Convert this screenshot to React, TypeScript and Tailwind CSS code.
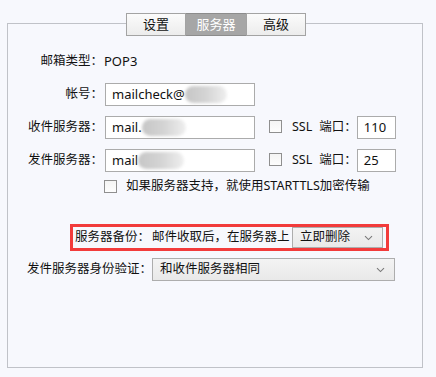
import * as React from "react"

const font = { fontFamily: '"Noto Sans", "Noto Sans CJK SC", sans-serif' }

// 模糊处理的文字块
function Blur({ w }: { w: number }) {
  return (
    <span
      className="inline-block h-[17px] rounded-full bg-gradient-to-r from-[#c6c6c6] via-[#d4d4d4] to-[#efefef] blur-[1.5px] align-middle"
      style={{ width: w }}
    />
  )
}

function CheckBox() {
  return (
    <span className="inline-block h-[13px] w-[13px] shrink-0 border border-[#8f8f8f] bg-gradient-to-b from-[#f4f4f4] to-[#fdfdfd]" />
  )
}

function Input({ className, children }: { className?: string; children: React.ReactNode }) {
  return (
    <div className={`flex h-[23px] items-center border border-[#ababab] bg-white pl-[6px] text-[13px] text-[#111] ${className ?? ""}`}>
      <span className="flex items-center whitespace-nowrap leading-none">{children}</span>
    </div>
  )
}

function Chevron() {
  return (
    <svg width="9" height="6" viewBox="0 0 9 6" className="shrink-0">
      <path d="M1 1.2 L4.5 4.6 L8 1.2" fill="none" stroke="#7a7a7a" strokeWidth="1.1" />
    </svg>
  )
}

function Select({ className, text }: { className?: string; text: string }) {
  return (
    <div className={`flex items-center justify-between border border-[#adadad] bg-gradient-to-b from-[#f3f3f3] to-[#e9e9e9] pl-[7px] pr-[9px] text-[12.5px] text-[#111] ${className ?? ""}`}>
      <span className="leading-none">{text}</span>
      <Chevron />
    </div>
  )
}

function Label({ children }: { children: React.ReactNode }) {
  return <div className="w-[95px] shrink-0 text-right text-[12.5px] leading-none text-[#111]">{children}</div>
}

export default function App() {
  const tabs = ["设置", "服务器", "高级"]

  return (
    <div className="h-[377px] w-[436px] overflow-hidden bg-[#f7f8fd] pt-[23px]" style={font}>
      <div className="relative ml-[7px] h-[345px] w-[416px] border border-[#c0c2c8] pt-[26px]">
        {/* 标签页 */}
        <div className="absolute left-[118px] top-[-11px] flex h-[23px]">
          {tabs.map((t, i) => (
            <div
              key={t}
              className={
                i === 1
                  ? "flex w-[60px] items-center justify-center border-y border-[#8c8c8c] bg-[#a6a6a6] text-[13px] text-white"
                  : "flex w-[60px] items-center justify-center border border-[#a3a3a3] bg-gradient-to-b from-[#fbfbfb] to-[#ececec] text-[13px] text-[#111]"
              }
            >
              {t}
            </div>
          ))}
        </div>

        {/* 邮箱类型 */}
        <div className="flex h-[23px] items-center">
          <Label>邮箱类型：</Label>
          <span className="ml-[1px] text-[13px] leading-none text-[#111]">POP3</span>
        </div>

        {/* 帐号 */}
        <div className="mt-[10px] flex items-center">
          <Label>帐号：</Label>
          <Input className="ml-[2px] w-[150px]">
            mailcheck@
            <Blur w={42} />
          </Input>
        </div>

        {/* 收件服务器 */}
        <div className="mt-[9px] flex items-center">
          <Label>收件服务器：</Label>
          <Input className="ml-[2px] w-[150px]">
            mail.
            <Blur w={44} />
          </Input>
          <span className="ml-[14px]"><CheckBox /></span>
          <span className="ml-[10px] text-[12.5px] leading-none text-[#111]">SSL</span>
          <span className="ml-[7px] text-[12.5px] leading-none text-[#111]">端口：</span>
          <Input className="w-[39px]">110</Input>
        </div>

        {/* 发件服务器 */}
        <div className="mt-[9px] flex items-center">
          <Label>发件服务器：</Label>
          <Input className="ml-[2px] w-[150px]">
            mail
            <Blur w={46} />
          </Input>
          <span className="ml-[14px]"><CheckBox /></span>
          <span className="ml-[10px] text-[12.5px] leading-none text-[#111]">SSL</span>
          <span className="ml-[7px] text-[12.5px] leading-none text-[#111]">端口：</span>
          <Input className="w-[39px]">25</Input>
        </div>

        {/* STARTTLS */}
        <div className="mt-[7px] flex h-[14px] items-center pl-[96px]">
          <CheckBox />
          <span className="ml-[9px] whitespace-nowrap text-[12.5px] leading-none text-[#111]">
            如果服务器支持，就使用STARTTLS加密传输
          </span>
        </div>

        {/* 服务器备份 */}
        <div className="ml-[62px] mt-[31px] flex h-[27px] w-[319px] items-center border-[3px] border-[#f23b3b] pl-[2px] pr-[3px]">
          <span className="whitespace-nowrap text-[12.5px] leading-none text-[#111]">服务器备份：</span>
          <span className="ml-[2px] whitespace-nowrap text-[12.5px] leading-none text-[#111]">邮件收取后，在服务器上</span>
          <Select className="ml-auto h-[21px] w-[91px]" text="立即删除" />
        </div>

        {/* 身份验证 */}
        <div className="mt-[7px] flex items-center pl-[19px]">
          <span className="w-[125px] shrink-0 whitespace-nowrap text-[12.5px] leading-none text-[#111]">发件服务器身份验证：</span>
          <Select className="h-[23px] w-[243px]" text="和收件服务器相同" />
        </div>
      </div>
    </div>
  )
}
